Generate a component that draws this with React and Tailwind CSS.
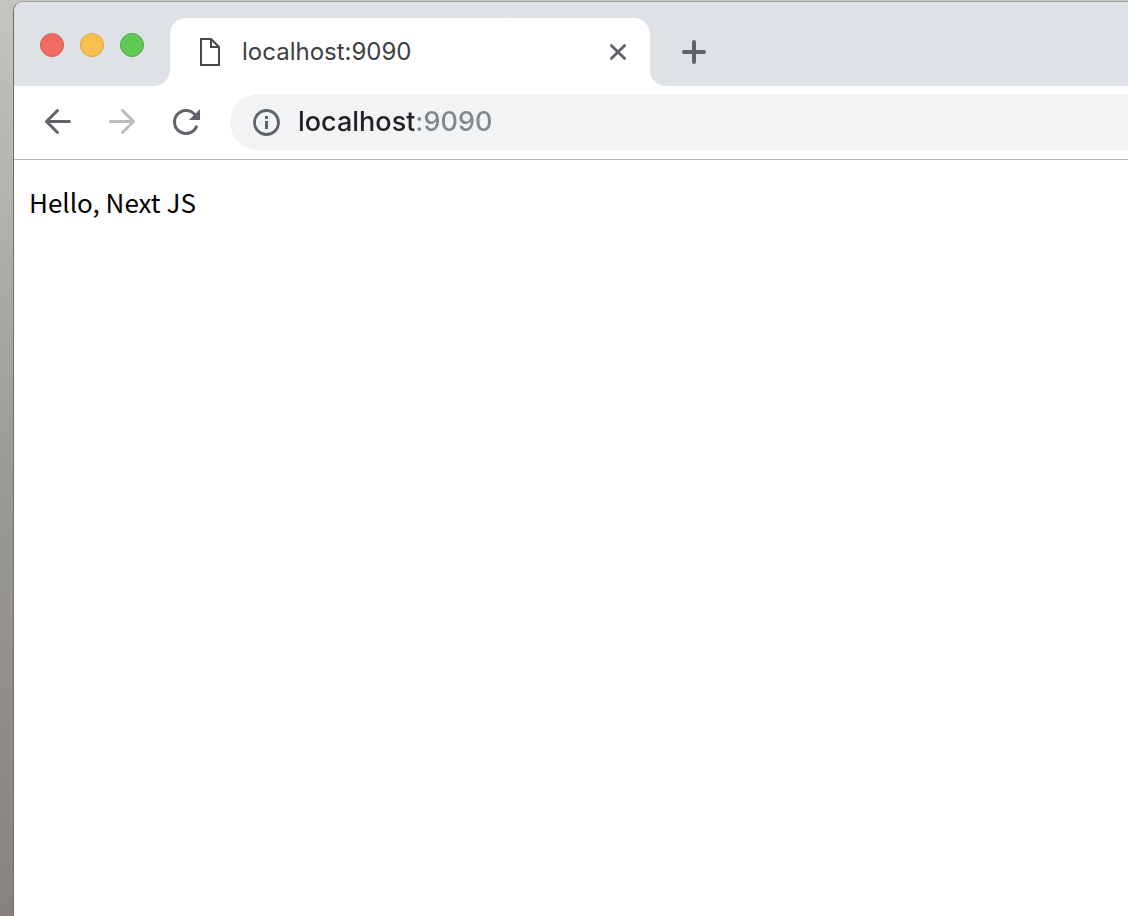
import React, { useState } from "react";

function PageIcon() {
  return (
    <svg width="24" height="30" viewBox="0 0 24 30" fill="none" stroke="#484848" strokeWidth="2" aria-hidden="true">
      <path d="M3 2H13L21 10V28H3Z" />
      <path d="M13 2V10H21" />
    </svg>
  );
}

function CloseIcon() {
  return (
    <svg width="20" height="20" viewBox="0 0 20 20" fill="none" stroke="#5f6368" strokeWidth="2.8" strokeLinecap="round" aria-hidden="true">
      <path d="M3.4 3.4L16.6 16.6M16.6 3.4L3.4 16.6" />
    </svg>
  );
}

function PlusIcon() {
  return (
    <svg width="28" height="28" viewBox="0 0 28 28" fill="none" stroke="#5f6368" strokeWidth="4" strokeLinecap="round" aria-hidden="true">
      <path d="M14 4V24M4 14H24" />
    </svg>
  );
}

function ArrowIcon({ forward }) {
  return (
    <svg width="32" height="32" viewBox="0 0 32 32" fill="none" stroke="currentColor" strokeWidth="3" strokeLinecap="round" strokeLinejoin="round" aria-hidden="true">
      <path d={forward ? "M4.5 15.5H27.5M16.5 4.5L27.5 15.5L16.5 26.5" : "M27.5 15.5H4.5M15.5 4.5L4.5 15.5L15.5 26.5"} />
    </svg>
  );
}

function ReloadIcon() {
  return (
    <svg width="32" height="32" viewBox="0 0 32 32" fill="none" aria-hidden="true">
      <path d="M26.4 20.9A11.5 11.5 0 1 1 24.5 8.2" stroke="#5f6368" strokeWidth="3" strokeLinecap="round" />
      <path d="M30 3V14H19Z" fill="#5f6368" />
    </svg>
  );
}

function InfoIcon() {
  return (
    <svg width="28" height="28" viewBox="0 0 28 28" fill="none" aria-hidden="true">
      <circle cx="14.5" cy="14.5" r="12" stroke="#5f6368" strokeWidth="2.8" />
      <path d="M13 8H16V11H13ZM13 13H16V21H13Z" fill="#5f6368" />
    </svg>
  );
}

const windowButtons = [
  { label: "Close window", color: "bg-[#f06b60] border-[#dc5a50]" },
  { label: "Minimize window", color: "bg-[#f7c04f] border-[#dda240]" },
  { label: "Zoom window", color: "bg-[#61c955] border-[#4fa93f]" },
];

export default function App() {
  const [address, setAddress] = useState("localhost:9090");

  return (
    <div className="flex min-h-screen flex-col bg-linear-to-b from-[#c5c4c0] via-[#9c9b98] to-[#88827f] pt-px pl-[13px] font-['Inter','Liberation_Sans',sans-serif]">
      <div className="flex grow flex-col overflow-hidden rounded-tl-[10px] border-t border-l border-t-[#a09f9d] border-l-[#6f6e6c] bg-white">
        <header>
          <div className="flex h-[84px]">
            <div className="flex w-[156px] shrink-0 gap-4 rounded-br-2xl bg-[#dee1e6] pt-[31px] pl-[26px]">
              {windowButtons.map((b) => (
                <button key={b.label} type="button" aria-label={b.label} className={`size-6 rounded-full border ${b.color}`} />
              ))}
            </div>
            <div className="flex w-[480px] shrink-0 bg-linear-to-b from-[#dee1e6] from-50% to-white to-50% pt-4">
              <div className="flex grow items-center rounded-t-2xl bg-white pr-[22px] pl-7">
                <PageIcon />
                <span className="ml-5 grow text-[24px] leading-8 text-[#3c4043]">localhost:9090</span>
                <button type="button" aria-label="Close tab">
                  <CloseIcon />
                </button>
              </div>
            </div>
            <div className="flex grow items-center rounded-bl-2xl bg-[#dee1e6] pt-4 pl-[30px]">
              <button type="button" aria-label="New tab">
                <PlusIcon />
              </button>
            </div>
          </div>
          <nav className="flex h-[74px] items-center border-b border-[#b3b4b4] pt-2 pb-[9px] pl-7">
            <button type="button" aria-label="Back" className="text-[#5f6368]">
              <ArrowIcon />
            </button>
            <button type="button" aria-label="Forward" disabled className="ml-8 text-[#babcbe]">
              <ArrowIcon forward />
            </button>
            <button type="button" aria-label="Reload" className="ml-8">
              <ReloadIcon />
            </button>
            <div className="ml-7 flex h-14 grow items-center gap-[18px] rounded-l-full bg-[#f1f3f4] pl-[22px]">
              <InfoIcon />
              <input
                type="text"
                aria-label="Address"
                value={address}
                onChange={(e) => setAddress(e.target.value)}
                className="min-w-0 grow bg-[linear-gradient(to_right,#202124_116px,#80868b_116px)] bg-clip-text text-[27px] leading-9 font-medium text-transparent caret-[#202124] outline-none"
              />
            </div>
          </nav>
        </header>
        <main className="px-[15px] py-[22px]">
          <p className="font-['Noto_Sans_CJK_KR',sans-serif] text-[26px] leading-10 text-black">Hello, Next JS</p>
        </main>
      </div>
    </div>
  );
}
